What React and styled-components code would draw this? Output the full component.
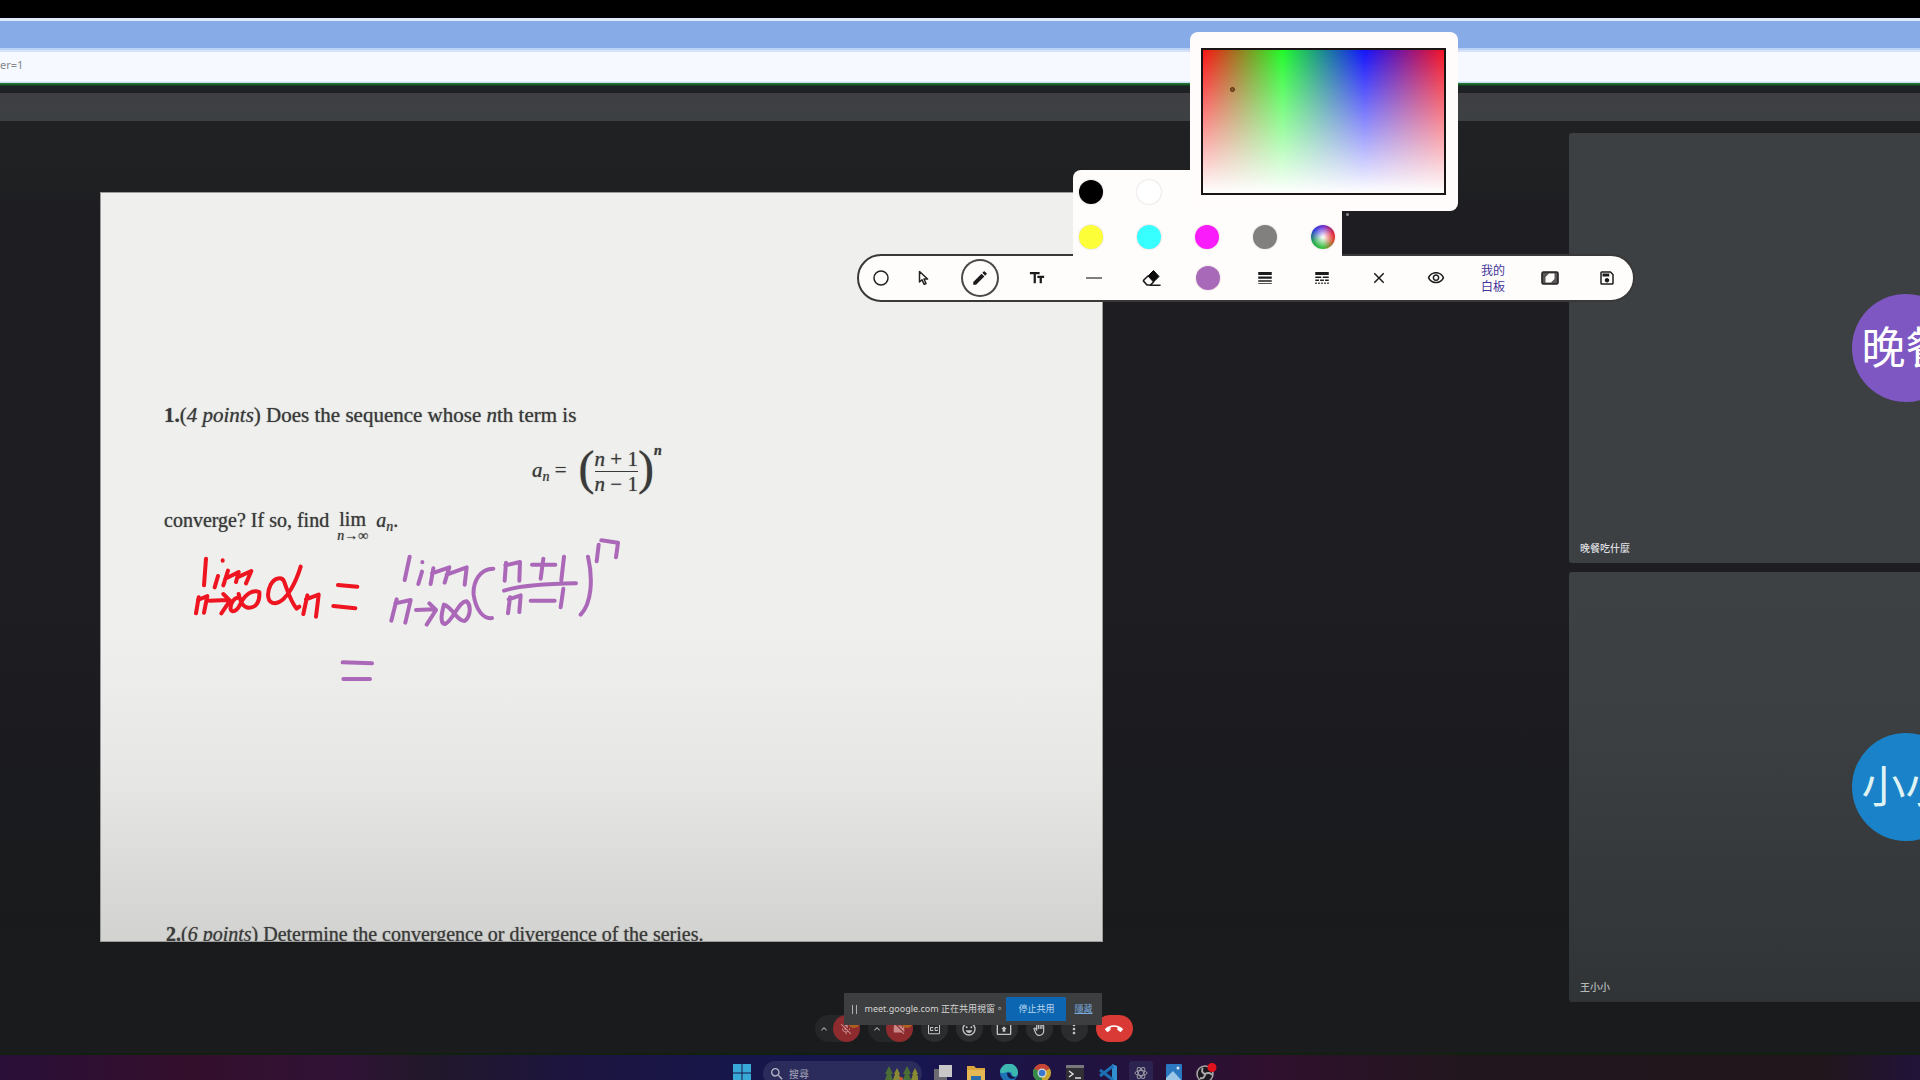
import React from "react";
import styled, { createGlobalStyle } from "styled-components";
import {
  MdTextFields, MdEdit, MdLineWeight, MdLineStyle, MdClose, MdOutlineVisibility,
  MdOutlineSave, MdKeyboardArrowUp, MdMicOff, MdVideocamOff, MdClosedCaptionOff,
  MdOutlineEmojiEmotions, MdOutlinePresentToAll, MdOutlineBackHand, MdMoreVert, MdCallEnd, MdSearch,
} from "react-icons/md";

const GlobalStyle = createGlobalStyle`
  *, *::before, *::after { box-sizing: border-box; }
  body {
    margin: 0;
    background: #202124;
    font-family: "Noto Sans", "Noto Sans CJK TC", sans-serif;
    overflow: hidden;
  }
  button { border: 0; padding: 0; background: none; color: inherit; font: inherit; cursor: pointer; }
`;

const Page = styled.div`
  position: relative;
  min-height: 100vh;
  display: flex;
  flex-direction: column;
  overflow: hidden;
`;

const Letterbox = styled.div`
  height: 18px;
  background: #000;
`;

const TabStrip = styled.div`
  height: 32px;
  background: #86abe6;
  border-top: 3px solid #dfeaf6;
  border-bottom: 2px solid #bcd2f4;
`;

const AddressBar = styled.div`
  height: 36px;
  display: flex;
  align-items: center;
  background: #f6f9ff;
  border-top: 2px solid #d6e3f8;
  border-bottom: 4px solid #c6dcec;
  box-shadow: inset 0 -1px #e4f0fa;
  padding-bottom: 4px;
`;

const Address = styled.input`
  flex: 1;
  border: 0;
  padding: 0;
  background: transparent;
  color: #85878c;
  font: 11px/16px "Noto Sans", sans-serif;
`;

const MeetHeader = styled.div`
  height: 35px;
  background: linear-gradient(#3f3f42, #3d4143);
  border-top: 7px solid #1f2224;
`;

const ShareLine = styled.div`
  height: 3px;
  background: linear-gradient(#2a8040, #0b3814);
  margin-top: -3px;
`;

const Stage = styled.main`
  flex: 1;
  display: grid;
  grid-template-columns: 1fr 351px;
  background: linear-gradient(#202123, #1f2022 60px, #1d1d22 100px, #1d1d22 480px, #191a1c 800px, #1a1b1c);
`;

const Presentation = styled.section`
  padding: 71px 466px 60px 100px;
  display: flex;
`;

const Paper = styled.article`
  position: relative;
  flex: 1;
  height: 750px;
  overflow: hidden;
  padding: 210px 0 0 63px;
  border: 1px solid #9b9b99;
  background: linear-gradient(#efefee, #efefee 440px, #e7e7e6 580px, #d2d2d0);
  color: #3a3a3a;
  font: 21px/24px "Liberation Serif", serif;
  text-shadow: 0 0 1px #6a6a6a;
  white-space: nowrap;
`;

const Line = styled.p`
  margin: 0;
`;

const Formula = styled.div`
  display: flex;
  align-items: center;
  height: 56px;
  margin: 16px 0 9px 368px;
  gap: 12px;
`;

const Group = styled.span`
  display: flex;
  align-items: center;
`;

const Paren = styled.span`
  font-size: 48px;
  line-height: 48px;
  margin-bottom: 6px;
`;

const Fraction = styled.span`
  display: flex;
  flex-direction: column;
  text-align: center;
  & > span:first-child { border-bottom: 1px solid #3a3a3a; }
`;

const Small = styled.i`
  font-size: 14px;
  line-height: 14px;
  font-weight: ${(p) => (p.$up ? "bold" : "normal")};
  align-self: ${(p) => (p.$up ? "flex-start" : "auto")};
  vertical-align: ${(p) => (p.$up ? "baseline" : "-4px")};
`;

const Limit = styled.span`
  display: inline-flex;
  flex-direction: column;
  align-items: center;
  vertical-align: top;
  margin: 0 3px;
  & > span { line-height: 22px; }
  & > i { font-size: 14px; line-height: 12px; }
`;

const Conclusion = styled(Line)`
  height: 32px;
  font-size: 20px;
`;

const SecondProblem = styled(Line)`
  padding: 382px 0 0 2px;
  font-size: 20px;
`;

const Ink = styled.svg`
  position: absolute;
  left: 69px;
  top: 327px;
  width: 480px;
  height: 190px;
  fill: none;
  stroke-width: 12;
  stroke-linecap: round;
  stroke-linejoin: round;
  pointer-events: none;
`;

const Tiles = styled.aside`
  display: grid;
  grid-template-rows: 1fr 1fr;
  grid-template-columns: 673px;
  gap: 9px;
  padding-top: 12px;
  overflow: hidden;
`;

const Tile = styled.figure`
  margin: 0;
  display: grid;
  grid-template-rows: 1fr 108px 1fr;
  justify-items: center;
  border-radius: 3px;
  background: ${(p) => (p.$dim ? "linear-gradient(#3e4143, #3c4042 30%, #303437)" : "#3c4043")};
`;

const Avatar = styled.div`
  grid-row: 2;
  width: 108px;
  height: 108px;
  border-radius: 50%;
  display: grid;
  place-items: center;
  padding-bottom: 6px;
  background: ${(p) => p.$color};
  color: ${(p) => p.$ink};
  font: 44px/64px "Noto Sans CJK TC", sans-serif;
`;

const Name = styled.figcaption`
  grid-row: 3;
  align-self: end;
  justify-self: start;
  padding: 0 0 7px 11px;
  color: ${(p) => p.$ink};
  font: 500 10px/16px "Noto Sans CJK TC", sans-serif;
`;

const Controls = styled.footer`
  display: flex;
  justify-content: center;
  height: 53px;
  padding: 13px 0 0 27px;
  background: #1a1b1c;
  border-bottom: 2px solid #12210f;
`;

const ControlRow = styled.div`
  position: relative;
  display: flex;
  align-items: flex-start;
  gap: 8px;
`;

const RoundButton = styled.button`
  width: ${(p) => (p.$wide ? "37px" : "27px")};
  height: 27px;
  border-radius: 14px;
  display: grid;
  place-items: center;
  background: ${(p) => p.$bg || "#2b2c2e"};
  color: ${(p) => p.$ink || "#c4c5c6"};
`;

const Split = styled.div`
  display: flex;
  width: 45px;
  height: 27px;
  border-radius: 14px;
  background: #252628;
  position: relative;
`;

const Expand = styled.button`
  width: 18px;
  display: grid;
  place-items: center;
  color: #a8a8a8;
`;

const Alert = styled.span`
  position: absolute;
  right: 0;
  top: 1px;
  width: 12px;
  height: 12px;
  border-radius: 50%;
  background: #b0601c;
`;

const ShareNotice = styled.div`
  position: absolute;
  left: 29px;
  top: -22px;
  width: 258px;
  height: 32px;
  display: flex;
  align-items: center;
  background: #3d3e3f;
  color: #d4d4d4;
  font: 9px/16px "Noto Sans", "Noto Sans CJK TC", sans-serif;
  white-space: nowrap;
  padding: 0 9px 0 8px;
`;

const Grip = styled.span`
  flex: none;
  width: 5px;
  height: 9px;
  border: solid #b0b0b0;
  border-width: 0 1px;
  margin-right: 8px;
`;

const StopButton = styled.button`
  flex: none;
  width: 60px;
  height: 24px;
  margin-left: auto;
  background: #0c66b2;
  color: #b9d6ef;
`;

const HideLink = styled.a`
  margin-left: 8px;
  color: #78a8dc;
`;

const Taskbar = styled.nav`
  height: 25px;
  display: flex;
  align-items: flex-start;
  justify-content: center;
  gap: 9px;
  padding: 6px 0 0 29px;
  overflow: hidden;
  background: linear-gradient(90deg, #2a0f38, #340f2c 10%, #301236 18%, #22182a 22%, #1d1540 30%, #17164a 38%, #181650 48%, #22123e 58%, #30102e 66%, #22161e 76%, #21161c 95%, #22133a);
`;

const Task = styled.button`
  width: 24px;
  height: 24px;
  flex: none;
  display: grid;
  place-items: center;
  border-radius: 3px;
  background: ${(p) => (p.$active ? "#2c2350" : "none")};
`;

const SearchBox = styled.label`
  display: flex;
  align-items: center;
  gap: 4px;
  width: 159px;
  height: 25px;
  flex: none;
  padding: 0 4px 0 6px;
  border-radius: 13px;
  background: #2c2c5c;
  color: #b6b6c6;
  & > input {
    flex: 1;
    min-width: 0;
    border: 0;
    padding: 0;
    background: none;
    font: 10px/16px "Noto Sans CJK TC", sans-serif;
  }
  & > input::placeholder { color: #a6a6b8; opacity: 1; }
`;

const Whiteboard = styled.div`
  position: absolute;
  left: 857px;
  top: 254px;
`;

const Toolbar = styled.div`
  display: flex;
  align-items: center;
  gap: 11px;
  height: 48px;
  padding: 0 7px 0 10px;
  border: 2px solid #3a393a;
  border-radius: 24px;
  background: #fffcfc;
  color: #1c1c1c;
`;

const Tools = styled.div`
  display: flex;
  gap: 19px;
`;

const Tool = styled.button`
  width: ${(p) => (p.$handle ? "24px" : "38px")};
  height: 38px;
  display: grid;
  place-items: center;
  border-radius: 50%;
  box-shadow: ${(p) => (p.$selected ? "inset 0 0 0 2px #4a494a" : "none")};
  color: #1c1c1c;
  font: 12px/16px "Noto Sans CJK TC", sans-serif;
`;

const BoardName = styled.span`
  width: 24px;
  color: #43359a;
`;

const Palette = styled.div`
  position: absolute;
  left: 216px;
  top: -84px;
  display: grid;
  grid-template-columns: repeat(5, 24px);
  gap: 21px 34px;
  padding: 10px 7px 8px 6px;
  border-radius: 8px 8px 0 0;
  background: #fffcfc;
`;

const Swatch = styled.button`
  width: 24px;
  height: 24px;
  border-radius: 50%;
  background: ${(p) => p.$fill};
  box-shadow: 0 0 2px #cfc6c6;
`;

const Picker = styled.div`
  position: absolute;
  left: 333px;
  top: -222px;
  width: 268px;
  height: 179px;
  padding: 16px 12px 16px 11px;
  border-radius: 8px;
  background: #fffcfb;
`;

const Spectrum = styled.div`
  position: relative;
  height: 147px;
  border: 2px solid #1a1414;
  background:
    linear-gradient(rgba(255, 255, 255, 0), #fff),
    linear-gradient(90deg, #fa1414, #21fb2b 33%, #1414fb 67%, #f41424);
`;

const Cursor = styled.span`
  position: absolute;
  left: 27px;
  top: 37px;
  width: 5px;
  height: 5px;
  border-radius: 50%;
  border: 1px solid #5a2c10;
  background: #7d5527;
`;

const PenTip = styled.span`
  position: absolute;
  left: 489px;
  top: -41px;
  width: 3px;
  height: 3px;
  border-radius: 50%;
  background: #8c8c90;
`;

const EraserIcon = () => (
  <svg width="19" height="18" viewBox="0 0 19 18" aria-hidden="true">
    <path d="M11.5 1.5 L17 7.5 L11.5 13 L6 7 Z" fill="#0c0c0c" stroke="#0c0c0c" strokeLinejoin="round" />
    <path d="M6 7 L1.8 11 a1 1 0 0 0 0 1.4 L5 16 H8.5 L11.5 13 M8 16.2 H18" fill="none" stroke="#1c1c1c" strokeWidth="1.6" strokeLinecap="round" />
  </svg>
);

const ArrowIcon = () => (
  <svg width="13" height="16" viewBox="0 0 13 16" fill="none" stroke="#222" strokeWidth="1.5" strokeLinejoin="round" aria-hidden="true">
    <path d="M2.5 1.5 V12 L5 9.8 L7.2 14.4 L9 13.5 L7 9 H10.6 Z" />
  </svg>
);

const RatioIcon = () => (
  <svg width="18" height="14" viewBox="0 0 18 14" aria-hidden="true">
    <rect x="1" y="1" width="16" height="12" rx="1.5" fill="#5a5657" stroke="#242223" strokeWidth="1.6" />
    <path d="M4.5 6 L8 2.400 H13.500 V8 L10 11.600 H4.500 Z" fill="#fffcfc" />
  </svg>
);

const ColorWheel = "radial-gradient(circle, #fff, rgba(255,255,255,0) 65%), conic-gradient(#6a2bd0, #e02038 70deg, #d84a2a 110deg, #35c23a 180deg, #22a84a 240deg, #2a3ad8 310deg, #6a2bd0)";

const palette = [
  ["黑", "#000"], ["白", "#fff"], ["紅", "#f22"], ["綠", "#3f3"], ["藍", "#22f"],
  ["黃", "#fcff38"], ["青", "#38ffff"], ["洋紅", "#fb1cfb"], ["灰", "#827f7f"], ["自訂", ColorWheel],
];

const redInk = "M108 116 L102 196 M144 168 L134 202 M158 121 V122 M174 152 L160 196 M166 176 L206 156 L198 186 M202 172 L244 153 L228 190 M86 232 L78 280 M84 240 L112 228 L102 278 M118 242 L174 240 M160 222 L180 242 L154 280 M206 222 C212 250 220 262 236 263 C258 264 270 245 268 216 C248 208 226 222 212 250 C202 274 186 280 182 268 C180 250 194 230 208 234 M392 140 C380 180 352 244 316 250 C290 250 290 218 302 194 C314 172 336 170 342 184 C352 210 362 245 380 266 L388 260 M412 226 L400 282 M408 238 L446 224 L438 290 M504 195 L562 200 M490 258 L556 265";
const purpleInk = "M719 110 L704 180 M756 155 L745 192 M757 126 V127 M790 145 L782 192 M786 160 L838 142 L824 188 M830 164 L890 142 L884 194 M680 238 L664 302 M676 250 L722 240 L706 308 M738 270 L792 268 M778 250 L798 270 L770 314 M822 254 C810 295 814 312 826 312 C850 300 868 240 890 244 C904 256 902 290 884 303 C862 306 845 258 822 254 M970 146 C930 146 908 185 911 225 C918 270 940 298 966 294 M1008 128 L1004 182 M1006 136 L1050 126 L1048 182 M1086 134 L1156 134 M1120 116 L1112 176 M1182 110 L1174 180 M1002 212 C1050 196 1120 192 1218 190 M1020 232 L1014 280 M1016 238 L1052 226 L1048 276 M1082 242 L1154 242 M1180 206 L1172 262 M1254 110 C1270 180 1264 250 1232 284 M1286 74 L1280 124 M1294 61 L1344 68 L1338 112 M518 427 L606 430 M520 477 L600 477";

const Tree = ({ x }) => (
  <g>
    <path d={`M${x} 1 l4 8 h-2 l2 6 h-8 l2 -6 h-2 z`} fill="#4a6e34" />
    <path d={`M${x + 8} 3 l3 6 h-1 l2 6 h-8 l2 -6 h-1 z`} fill="#8a8a34" />
  </g>
);

export default function App() {
  return (
    <Page lang="zh-Hant">
      <GlobalStyle />
      <Letterbox />
      <TabStrip />
      <AddressBar>
        <Address aria-label="網址" readOnly value="er=1" />
      </AddressBar>
      <ShareLine />
      <MeetHeader />
      <Stage>
        <Presentation>
          <Paper lang="en">
            <Line><b>1.</b>(<i>4 points</i>) Does the sequence whose <i>n</i>th term is</Line>
            <Formula>
              <span><i>a</i><Small>n</Small> =</span>
              <Group>
                <Paren>(</Paren>
                <Fraction><span><i>n</i> + 1</span><span><i>n</i> − 1</span></Fraction>
                <Paren>)</Paren>
                <Small $up>n</Small>
              </Group>
            </Formula>
            <Conclusion>
              converge? If so, find <Limit><span>lim</span><i>n→∞</i></Limit> <i>a</i><Small>n</Small>.
            </Conclusion>
            <SecondProblem><b>2.</b>(<i>6 points</i>) Determine the convergence or divergence of the series.</SecondProblem>
            <Ink viewBox="0 0 1440 570" aria-hidden="true">
              <path d={redInk} stroke="#ee1420" />
              <path d={purpleInk} stroke="#ab68b8" />
            </Ink>
          </Paper>
        </Presentation>
        <Tiles>
          <Tile>
            <Avatar $color="#7e57c2" $ink="#fff">晚餐</Avatar>
            <Name $ink="#dedfe0">晚餐吃什麼</Name>
          </Tile>
          <Tile $dim>
            <Avatar $color="#1a82c8" $ink="#dff3f3">小小</Avatar>
            <Name $ink="#b4b6b8">王小小</Name>
          </Tile>
        </Tiles>
      </Stage>
      <Controls>
        <ControlRow>
          <Split>
            <Expand aria-label="音訊設定"><MdKeyboardArrowUp size={12} /></Expand>
            <RoundButton $bg="#8e2b2e" $ink="#c9898a" aria-label="麥克風"><MdMicOff size={14} /></RoundButton>
            <Alert />
          </Split>
          <Split>
            <Expand aria-label="視訊設定"><MdKeyboardArrowUp size={12} /></Expand>
            <RoundButton $bg="#8e2b2e" $ink="#c9898a" aria-label="攝影機"><MdVideocamOff size={14} /></RoundButton>
            <Alert />
          </Split>
          <RoundButton aria-label="字幕"><MdClosedCaptionOff size={16} /></RoundButton>
          <RoundButton aria-label="表情"><MdOutlineEmojiEmotions size={16} /></RoundButton>
          <RoundButton aria-label="分享"><MdOutlinePresentToAll size={16} /></RoundButton>
          <RoundButton aria-label="舉手"><MdOutlineBackHand size={14} /></RoundButton>
          <RoundButton aria-label="更多"><MdMoreVert size={16} /></RoundButton>
          <RoundButton $wide $bg="#d93a35" $ink="#fff" aria-label="離開"><MdCallEnd size={18} /></RoundButton>
          <ShareNotice>
            <Grip />
            <span>meet.google.com 正在共用視窗。</span>
            <StopButton>停止共用</StopButton>
            <HideLink href="#">隱藏</HideLink>
          </ShareNotice>
        </ControlRow>
      </Controls>
      <Taskbar>
        <Task aria-label="開始">
          <svg width="18" height="18" viewBox="0 0 18 18" fill="#38a9d6"><path d="M0 0h8.5v8.5H0zM9.5 0H18v8.5H9.5zM0 9.500h8.500V18H0zM9.500 9.500H18V18H9.500z" /></svg>
        </Task>
        <SearchBox>
          <MdSearch size={16} />
          <input type="text" placeholder="搜尋" aria-label="搜尋" />
          <svg width="34" height="18" viewBox="0 0 34 18"><Tree x={5} /><Tree x={23} /><path d="M0 17 Q17 12 34 17 V18 H0Z" fill="#2f8ca8" /><circle cx="17" cy="14" r="2" fill="#c55a32" /></svg>
        </SearchBox>
        <Task aria-label="工作檢視">
          <svg width="18" height="18" viewBox="0 0 18 18"><rect x="0" y="5" width="13" height="12" fill="#6a6a70" /><rect x="5" y="1" width="13" height="12" fill="#c8c8c8" /></svg>
        </Task>
        <Task aria-label="檔案總管">
          <svg width="18" height="18" viewBox="0 0 18 18"><path d="M0 2h7l2 2h9v14H0z" fill="#dca43c" /><path d="M0 6h18v12H0z" fill="#e6b955" /><path d="M4 12h10v6H4z" fill="#2b6da8" /></svg>
        </Task>
        <Task aria-label="Edge">
          <svg width="18" height="18" viewBox="0 0 18 18"><circle cx="9" cy="9" r="9" fill="#1d72b8" /><path d="M0 8a9 9 0 0 1 18 1c0 3-3 4-6 3 1-3-2-5-5-4S1 10 0 8z" fill="#3cb8b0" /><path d="M7 9c0 5 4 7 9 5l-4-2c-2-1-1-4-5-3z" fill="#171a4c" /></svg>
        </Task>
        <Task aria-label="Chrome">
          <svg width="18" height="18" viewBox="0 0 18 18"><circle cx="9" cy="9" r="9" fill="#c9a72c" /><path d="M9 9 L1.200 4.500 A9 9 0 0 1 16.800 4.500 Z" fill="#c84436" /><path d="M9 9 L1.200 4.500 A9 9 0 0 0 9 18 Z" fill="#358a4a" /><circle cx="9" cy="9" r="4.500" fill="#ddd" /><circle cx="9" cy="9" r="3.300" fill="#3a78cc" /></svg>
        </Task>
        <Task aria-label="終端機">
          <svg width="18" height="16" viewBox="0 0 18 16"><rect width="18" height="16" rx="1" fill="#303034" /><path d="M0 0h18v3H0z" fill="#77777c" /><path d="M3 6l4 3-4 3M9 13h6" stroke="#ddd" strokeWidth="1.500" fill="none" /></svg>
        </Task>
        <Task aria-label="VS Code">
          <svg width="18" height="18" viewBox="0 0 18 18"><path d="M13 0l5 2v14l-5 2z" fill="#2f8fd0" /><path d="M14 2L1 12M14 16L1 6" stroke="#1c6fb0" strokeWidth="3" /></svg>
        </Task>
        <Task $active aria-label="白板">
          <svg width="14" height="14" viewBox="0 0 14 14" fill="none" stroke="#9a9aa4"><ellipse cx="7" cy="7" rx="6" ry="2.500" /><ellipse cx="7" cy="7" rx="6" ry="2.500" transform="rotate(60 7 7)" /><ellipse cx="7" cy="7" rx="6" ry="2.500" transform="rotate(120 7 7)" /></svg>
        </Task>
        <Task aria-label="相片">
          <svg width="16" height="18" viewBox="0 0 16 18"><rect width="16" height="18" rx="1" fill="#2c78c0" /><path d="M0 14l7-7 9 10v1H0z" fill="#9cc8e8" /><circle cx="12" cy="4" r="1.500" fill="#d8e8f4" /></svg>
        </Task>
        <Task aria-label="OBS">
          <svg width="22" height="20" viewBox="0 0 22 20"><circle cx="9" cy="11" r="8" fill="#1c1a20" stroke="#aaa" strokeWidth="1.500" /><path d="M9 11c-3-1-4-4-2-6M9 11c3-2 6-1 7 1M9 11c0 3-2 5-5 4" stroke="#aaa" strokeWidth="2" fill="none" /><circle cx="16" cy="4.500" r="4.500" fill="#e0121c" /></svg>
        </Task>
      </Taskbar>

      <Whiteboard>
        <Toolbar role="toolbar" aria-label="白板工具">
          <Tool $handle aria-label="移動">
            <svg width="16" height="16" viewBox="0 0 16 16"><circle cx="8" cy="8" r="7" fill="none" stroke="#222" strokeWidth="1.500" /></svg>
          </Tool>
          <Tools>
            <Tool aria-label="選取"><ArrowIcon /></Tool>
            <Tool $selected aria-label="畫筆"><MdEdit size={18} /></Tool>
            <Tool aria-label="文字"><MdTextFields size={18} /></Tool>
            <Tool aria-label="直線"><svg width="16" height="2"><path d="M0 1H16" stroke="#555" strokeWidth="1.500" /></svg></Tool>
            <Tool aria-label="橡皮擦"><EraserIcon /></Tool>
            <Tool aria-label="顏色"><Swatch as="span" $fill="#a86ab8" /></Tool>
            <Tool aria-label="粗細"><MdLineWeight size={18} /></Tool>
            <Tool aria-label="線型"><MdLineStyle size={18} /></Tool>
            <Tool aria-label="清除"><MdClose size={18} /></Tool>
            <Tool aria-label="顯示"><MdOutlineVisibility size={18} /></Tool>
            <Tool><BoardName>我的白板</BoardName></Tool>
            <Tool aria-label="比例"><RatioIcon /></Tool>
            <Tool aria-label="儲存"><MdOutlineSave size={18} /></Tool>
          </Tools>
        </Toolbar>
        <Palette>
          {palette.map(([name, fill]) => <Swatch key={name} $fill={fill} aria-label={name} />)}
        </Palette>
        <Picker>
          <Spectrum><Cursor /></Spectrum>
        </Picker>
        <PenTip />
      </Whiteboard>
    </Page>
  );
}
